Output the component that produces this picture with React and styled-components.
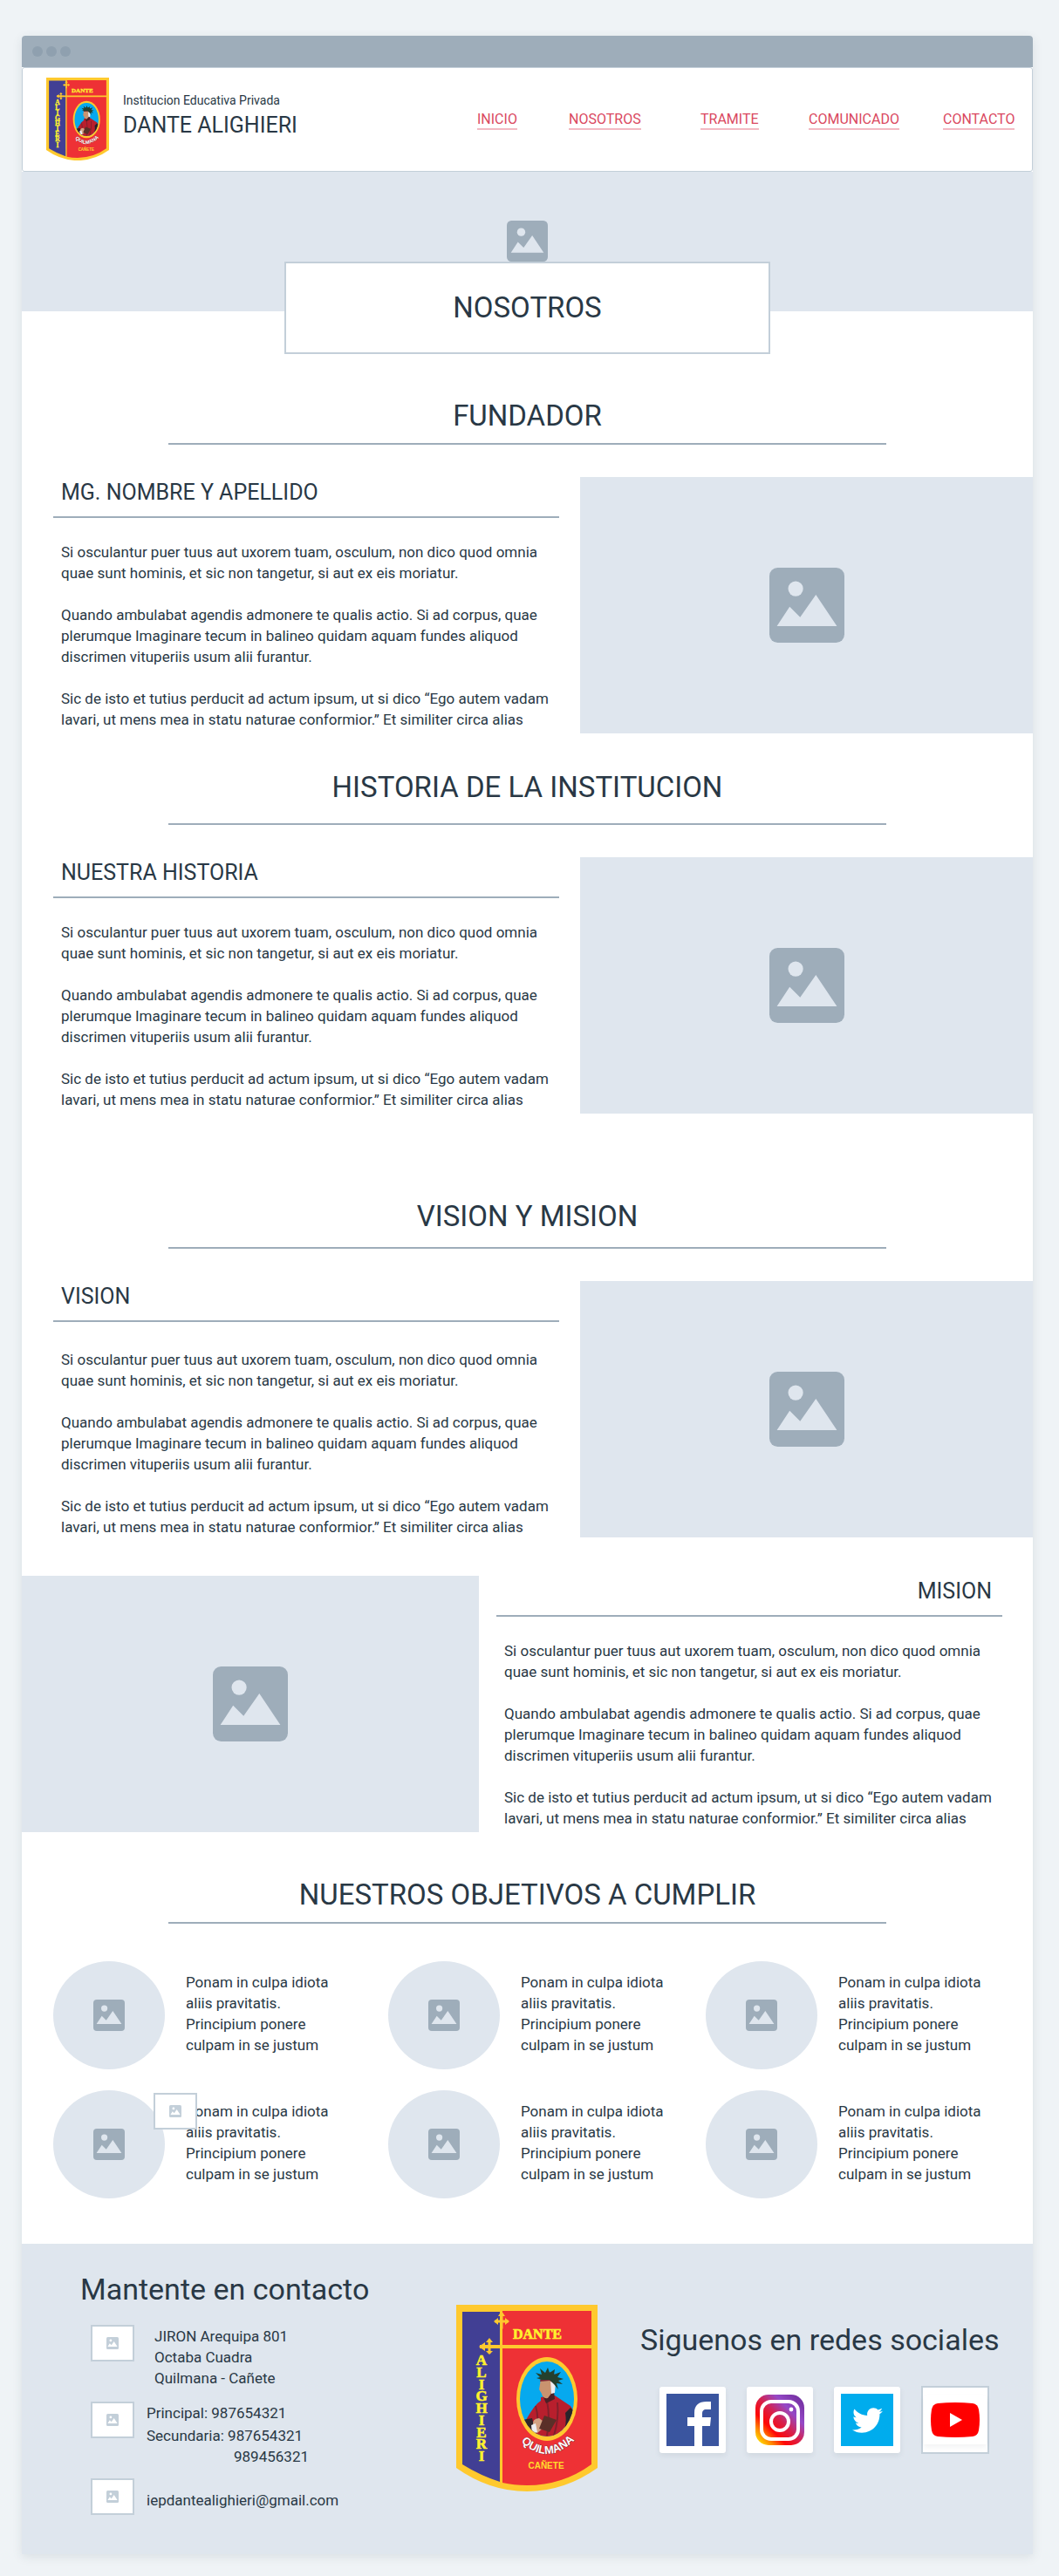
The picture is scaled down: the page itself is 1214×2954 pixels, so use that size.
import React, { useId } from "react";
import styled, { createGlobalStyle } from "styled-components";
import { FaTwitter } from "react-icons/fa";

const color = {
  page: "#eff3f6",
  bar: "#9eadba",
  dot: "#8fa0af",
  panel: "#dfe6ee",
  line: "#c3cfd9",
  ink: "#293845",
  link: "#da4860",
  linkLine: "#f2b9c2",
};

const GlobalStyle = createGlobalStyle`
  *, *::before, *::after { box-sizing: border-box; }
  body {
    margin: 0;
    background: ${color.page};
    color: ${color.ink};
    font-family: Roboto, "Liberation Sans", sans-serif;
    font-size: 17px;
    line-height: 24px;
  }
  h1, h2, h3, p, ul { margin: 0; padding: 0; font-weight: 400; }
  ul { list-style: none; }
  svg { display: block; }
`;

const Page = styled.div`
  padding: 41px 30px 25px 25px;
`;

const Window = styled.div`
  background: #fff;
  border-radius: 4px 4px 0 0;
  box-shadow: 0 3px 12px rgba(41, 56, 69, 0.1);
`;

const TitleBar = styled.div`
  display: flex;
  align-items: center;
  gap: 4px;
  height: 36px;
  padding-left: 12px;
  background: ${color.bar};
  border-radius: 4px 4px 0 0;
`;

const Dot = styled.span`
  width: 12px;
  height: 12px;
  border-radius: 50%;
  background: ${color.dot};
`;

const Header = styled.header`
  display: flex;
  justify-content: space-between;
  min-height: 120px;
  padding: 11px 20px 0 27px;
  border: 1px solid ${color.line};
  border-radius: 3px;
`;

const Brand = styled.div`
  display: flex;
  align-items: flex-start;
  gap: 16px;
`;

const BrandText = styled.div`
  padding-top: 16px;
`;

const BrandKind = styled.p`
  font-size: 14px;
  line-height: 20px;
`;

const BrandName = styled.p`
  padding-top: 4px;
  font-size: 25px;
  line-height: 30px;
`;

const Nav = styled.nav`
  display: grid;
  grid-template-columns: 105px 151px 124px 154px 82px;
  justify-items: start;
  align-content: start;
  padding-top: 38px;
`;

const NavLink = styled.a`
  color: ${color.link};
  font-size: 16px;
  line-height: 20px;
  text-decoration: none;
  border-bottom: 2px solid ${color.linkLine};
`;

const Hero = styled.section`
  display: flex;
  flex-direction: column;
  align-items: center;
  padding-top: 56px;
  background: ${color.panel};
`;

const HeroTitle = styled.h1`
  display: flex;
  align-items: center;
  justify-content: center;
  width: 48%;
  min-width: 300px;
  height: 106px;
  margin-bottom: -49px;
  background: #fff;
  border: 2px solid ${color.line};
  font-size: 33px;
  line-height: 40px;
`;

const Section = styled.section`
  padding-top: ${(p) => p.$top}px;
`;

const SectionTitle = styled.h2`
  width: 71%;
  margin: 0 auto 37px;
  padding-bottom: ${(p) => p.$drop}px;
  border-bottom: 2px solid ${color.bar};
  font-size: 33px;
  line-height: 40px;
  text-align: center;
`;

const Split = styled.div`
  display: grid;
  grid-template-columns: ${(p) => (p.$flip ? "524fr 635fr" : "640fr 519fr")};
  margin-top: ${(p) => (p.$flip ? 44 : 0)}px;
`;

const Picture = styled.div`
  display: flex;
  align-items: center;
  justify-content: center;
  min-height: 294px;
  background: ${color.panel};
`;

const Article = styled.article`
  padding: ${(p) => (p.$flip ? "3px 35px 0 20px" : "3px 24px 0 36px")};
`;

const ArticleTitle = styled.h3`
  padding: 0 12px 12px 9px;
  border-bottom: 2px solid ${color.bar};
  font-size: 25px;
  line-height: 30px;
  text-align: ${(p) => (p.$flip ? "right" : "left")};
`;

const ArticleBody = styled.div`
  display: grid;
  gap: 24px;
  padding: ${(p) => p.$gap}px 0 0 9px;
`;

const Goals = styled.ul`
  display: grid;
  grid-template-columns: 384fr 364fr 375fr;
  row-gap: 24px;
  padding: 6px 0 52px 36px;
`;

const Goal = styled.li`
  position: relative;
  display: flex;
  gap: 24px;
`;

const Oval = styled.div`
  display: flex;
  flex: none;
  align-items: center;
  justify-content: center;
  width: 128px;
  height: 124px;
  border-radius: 50%;
  background: ${color.panel};
`;

const GoalText = styled.p`
  padding-top: 12px;
`;

const Frame = styled.div`
  display: flex;
  flex: none;
  align-items: center;
  justify-content: center;
  width: 50px;
  height: 42px;
  background: #fff;
  border: 2px solid ${color.line};
`;

const FloatingFrame = styled(Frame)`
  position: absolute;
  top: 3px;
  left: 115px;
`;

const Footer = styled.footer`
  display: grid;
  grid-template-columns: 498fr 211fr 450fr;
  padding-bottom: 45px;
  background: ${color.panel};
`;

const FooterTitle = styled.h2`
  font-size: 34px;
  line-height: 40px;
`;

const Contact = styled.div`
  padding: 32px 0 0 67px;
`;

const ContactList = styled.ul`
  display: grid;
  grid-template-rows: 88px 88px auto;
  padding: 21px 0 0 12px;
`;

const ContactRow = styled.li`
  display: flex;
  gap: ${(p) => (p.$wide ? 23 : 14)}px;
`;

const ContactText = styled.div`
  padding-top: ${(p) => (p.$low ? 13 : 1)}px;
`;

const Phone = styled.p`
  padding-left: ${(p) => (p.$indent ? 100 : 0)}px;
  margin-top: ${(p) => (p.$spaced ? 2 : 0)}px;
`;

const Mail = styled.a`
  color: inherit;
  text-decoration: none;
`;

const FooterCrest = styled.div`
  padding-top: 70px;
`;

const Social = styled.div`
  padding-top: 90px;
`;

const SocialList = styled.ul`
  display: flex;
  align-items: center;
  gap: 24px;
  padding: 33px 0 0 22px;
`;

const Tile = styled.a`
  display: flex;
  align-items: center;
  justify-content: center;
  width: 76px;
  height: 76px;
  background: #fff;
  border-radius: 3px;
  box-shadow: 0 3px 6px rgba(41, 56, 69, 0.08);
`;

const OutlinedTile = styled(Tile)`
  width: 78px;
  height: 78px;
  border: 2px solid ${color.line};
  border-radius: 0;
  box-shadow: none;
`;

const TileCard = styled.span`
  display: flex;
  align-items: center;
  justify-content: center;
  width: 72px;
  height: 56px;
  box-shadow: 0 3px 6px rgba(41, 56, 69, 0.06);
`;

const TwitterTile = styled.span`
  display: flex;
  align-items: center;
  justify-content: center;
  width: 60px;
  height: 60px;
  background: #00aced;
  color: #fff;
`;

function ImageIcon({ size, fill = color.bar, cut = color.panel }) {
  return (
    <svg width={size} height={size} viewBox="0 0 100 100" aria-hidden="true">
      <rect width="100" height="100" rx="11" fill={fill} />
      <circle cx="35" cy="28" r="10" fill={cut} />
      <path d="M10 78 27 52 41 66 62 36 90 78Z" fill={cut} />
    </svg>
  );
}

const sideLetters = "ALIGHIERI".split("");

function Crest({ width }) {
  const arc = useId();
  const clip = useId();
  return (
    <svg width={width} viewBox="0 0 162 214" role="img" aria-label="Dante Alighieri, Quilmana, Cañete">
      <path d="M0 0H162V187Q124 214 81 214Q38 214 0 187Z" fill="#ffc92e" />
      <path d="M7 8H50V203Q28 196 7 183Z" fill="#413f94" />
      <path d="M53 7H155V183Q122 207 81 207Q66 207 53 204Z" fill="#ee3135" />
      <path d="M27 46H156V50H27Z" fill="#ffc92e" />
      <g stroke="#ffc92e" strokeWidth="3" strokeLinecap="square">
        <path d="M52 12V26M46 19H58" />
        <path d="M38 42V54M30 48H44" />
      </g>
      <g fill="#ffc92e">
        <path d="M52 7 56 13H48ZM43 19 48 15V23ZM61 19 56 15V23Z" />
        <path d="M26 48 33 43V53ZM38 38 42 43H34ZM38 57 42 53H34Z" />
      </g>
      <text x="93" y="39" textAnchor="middle" fontFamily="Liberation Serif, serif" fontWeight="700" fontSize="16" fill="#fff22d" stroke="#fff22d" strokeWidth="0.6">
        DANTE
      </text>
      <g textAnchor="middle" fontFamily="Liberation Serif, serif" fontWeight="700" fontSize="17" fill="#fff22d" stroke="#fff22d" strokeWidth="0.6">
        {sideLetters.map((letter, i) => (
          <text key={i} x="29" y={69 + i * 13.75}>{letter}</text>
        ))}
      </g>
      <clipPath id={clip}>
        <ellipse cx="104" cy="108" rx="31" ry="43" />
      </clipPath>
      <ellipse cx="104" cy="108" rx="35" ry="48" fill="#ffc92e" />
      <g clipPath={`url(#${clip})`}>
        <rect x="70" y="60" width="70" height="96" fill="#06a9ee" />
        <path d="M97 106 113 104 131 116 140 130V156H74L80 132Q90 114 97 110Z" fill="#b81f2d" />
        <path d="M125 124 131 118 140 128V150L118 154Q128 142 125 124Z" fill="#28242b" />
        <path d="M76 132 87 130 93 152H76Z" fill="#30272c" />
        <path d="M91 116Q95 130 92 142M104 110Q108 130 104 150M116 112Q118 130 112 150" fill="none" stroke="#80202c" strokeWidth="2" />
        <path d="M99 104 112 99 113 108 103 113Z" fill="#4b2027" />
        <path d="M97 85 108 84 111 99 105 107Q99 108 98 102L95 97Z" fill="#c9936f" />
        <path d="M108 86 114 89 113 101 109 102Z" fill="#efedf0" />
        <path d="M96 88 98 79 110 77 117 84 114 91 107 87Z" fill="#7a2734" />
        <path d="M92 84 96 83 91 78 98 80 96 73 102 78 105 72 107 78 113 74 112 80 120 77 116 83 123 85 117 87 122 91 115 90 117 97 112 91 107 86 98 86Z" fill="#24402d" />
        <path d="M88 137Q87 131 95 130L103 136 100 141 93 147Q87 146 88 137Z" fill="#d3a283" />
        <path d="M86 138 91 136 93 146 87 148Z" fill="#eeeef2" />
        <path d="M101 127 115 132 107 146 95 142Z" fill="#5a2f28" />
      </g>
      <path id={arc} d="M66 148Q104 195 144 146" fill="none" />
      <text fontFamily="Liberation Sans, sans-serif" fontWeight="700" fontSize="13" fill="#fff" stroke="#7b2430" strokeWidth="0.8" paintOrder="stroke">
        <textPath href={`#${arc}`} startOffset="50%" textAnchor="middle">QUILMANA</textPath>
      </text>
      <text x="103" y="188" textAnchor="middle" fontFamily="Liberation Sans, sans-serif" fontWeight="700" fontSize="10" fill="#ffdd2d">
        CAÑETE
      </text>
    </svg>
  );
}

function FacebookLogo() {
  return (
    <svg width="60" height="60" viewBox="0 0 60 60" aria-hidden="true">
      <rect width="60" height="60" fill="#3a559f" />
      <path d="M32 60V37H24V27H32V22C32 13 37 9 46 9H51V18H46C42 18 41 20 41 23V27H51L50 37H41V60Z" fill="#fff" />
    </svg>
  );
}

function InstagramLogo() {
  const gradient = useId();
  return (
    <svg width="56" height="58" viewBox="0 0 56 58" aria-hidden="true">
      <linearGradient id={gradient} x1="0" y1="1" x2="1" y2="0">
        <stop offset="0.06" stopColor="#ffdd00" />
        <stop offset="0.18" stopColor="#ff8a00" />
        <stop offset="0.32" stopColor="#ff0606" />
        <stop offset="0.5" stopColor="#d8204a" />
        <stop offset="0.7" stopColor="#9549c7" />
        <stop offset="0.88" stopColor="#7a35a8" />
        <stop offset="1" stopColor="#7030a0" />
      </linearGradient>
      <rect width="56" height="58" rx="15" fill={`url(#${gradient})`} />
      <g fill="none" stroke="#fff" strokeWidth="4">
        <rect x="7" y="8" width="42" height="43" rx="11" />
        <circle cx="28" cy="31" r="10" />
      </g>
      <circle cx="41" cy="17" r="2.4" fill="#fff" />
    </svg>
  );
}

function YoutubeLogo() {
  return (
    <svg width="56" height="40" viewBox="0 0 56 40" aria-hidden="true">
      <path d="M8 1Q28-1 48 1Q54 2 55 8Q57 20 55 32Q54 38 48 39Q28 41 8 39Q2 38 1 32Q-1 20 1 8Q2 2 8 1Z" fill="#ff0000" />
      <path d="M22 12 36 20 22 28Z" fill="#fff" />
    </svg>
  );
}

function Copy({ flip, title, gap = 27 }) {
  return (
    <Article $flip={flip}>
      <ArticleTitle $flip={flip}>{title}</ArticleTitle>
      <ArticleBody $gap={gap}>
        <p>
          Si osculantur puer tuus aut uxorem tuam, osculum, non dico quod omnia
          <br />
          quae sunt hominis, et sic non tangetur, si aut ex eis moriatur.
        </p>
        <p>
          Quando ambulabat agendis admonere te qualis actio. Si ad corpus, quae
          <br />
          plerumque Imaginare tecum in balineo quidam aquam fundes aliquod
          <br />
          discrimen vituperiis usum alii furantur.
        </p>
        <p>
          Sic de isto et tutius perducit ad actum ipsum, ut si dico “Ego autem vadam
          <br />
          lavari, ut mens mea in statu naturae conformior.” Et similiter circa alias
        </p>
      </ArticleBody>
    </Article>
  );
}

const navItems = ["INICIO", "NOSOTROS", "TRAMITE", "COMUNICADO", "CONTACTO"];
const goals = [1, 2, 3, 4, 5, 6];

function SmallFrame() {
  return (
    <Frame>
      <ImageIcon size={14} fill={color.line} cut="#fff" />
    </Frame>
  );
}

export default function App() {
  return (
    <Page>
      <GlobalStyle />
      <Window>
        <TitleBar>
          <Dot />
          <Dot />
          <Dot />
        </TitleBar>
        <Header>
          <Brand>
            <Crest width={72} />
            <BrandText>
              <BrandKind>Institucion Educativa Privada</BrandKind>
              <BrandName>DANTE ALIGHIERI</BrandName>
            </BrandText>
          </Brand>
          <Nav>
            {navItems.map((item) => (
              <NavLink key={item} href={`#${item.toLowerCase()}`}>{item}</NavLink>
            ))}
          </Nav>
        </Header>

        <main>
          <Hero>
            <ImageIcon size={47} />
            <HeroTitle>NOSOTROS</HeroTitle>
          </Hero>

          <Section $top={100}>
            <SectionTitle $drop={11}>FUNDADOR</SectionTitle>
            <Split>
              <Copy title="MG. NOMBRE Y APELLIDO" />
              <Picture><ImageIcon size={86} /></Picture>
            </Split>
          </Section>

          <Section $top={42}>
            <SectionTitle $drop={21}>HISTORIA DE LA INSTITUCION</SectionTitle>
            <Split>
              <Copy title="NUESTRA HISTORIA" />
              <Picture><ImageIcon size={86} /></Picture>
            </Split>
          </Section>

          <Section $top={98}>
            <SectionTitle $drop={15}>VISION Y MISION</SectionTitle>
            <Split>
              <Copy title="VISION" gap={31} />
              <Picture><ImageIcon size={86} /></Picture>
            </Split>
            <Split $flip>
              <Picture><ImageIcon size={86} /></Picture>
              <Copy flip title="MISION" />
            </Split>
          </Section>

          <Section $top={52}>
            <SectionTitle $drop={11}>NUESTROS OBJETIVOS A CUMPLIR</SectionTitle>
            <Goals>
              {goals.map((goal) => (
                <Goal key={goal}>
                  <Oval><ImageIcon size={36} /></Oval>
                  <GoalText>
                    Ponam in culpa idiota
                    <br />
                    aliis pravitatis.
                    <br />
                    Principium ponere
                    <br />
                    culpam in se justum
                  </GoalText>
                  {goal === 4 && (
                    <FloatingFrame>
                      <ImageIcon size={14} fill={color.line} cut="#fff" />
                    </FloatingFrame>
                  )}
                </Goal>
              ))}
            </Goals>
          </Section>
        </main>

        <Footer>
          <Contact>
            <FooterTitle>Mantente en contacto</FooterTitle>
            <ContactList>
              <ContactRow $wide>
                <SmallFrame />
                <ContactText>
                  <p>JIRON Arequipa 801</p>
                  <p>Octaba Cuadra</p>
                  <p>Quilmana - Cañete</p>
                </ContactText>
              </ContactRow>
              <ContactRow>
                <SmallFrame />
                <ContactText>
                  <Phone>Principal: 987654321</Phone>
                  <Phone $spaced>Secundaria: 987654321</Phone>
                  <Phone $indent>989456321</Phone>
                </ContactText>
              </ContactRow>
              <ContactRow>
                <SmallFrame />
                <ContactText $low>
                  <Mail href="mailto:iepdantealighieri@gmail.com">iepdantealighieri@gmail.com</Mail>
                </ContactText>
              </ContactRow>
            </ContactList>
          </Contact>
          <FooterCrest>
            <Crest width={162} />
          </FooterCrest>
          <Social>
            <FooterTitle>Siguenos en redes sociales</FooterTitle>
            <SocialList>
              <li><Tile href="#facebook" aria-label="Facebook"><FacebookLogo /></Tile></li>
              <li><Tile href="#instagram" aria-label="Instagram"><InstagramLogo /></Tile></li>
              <li>
                <Tile href="#twitter" aria-label="Twitter">
                  <TwitterTile><FaTwitter size={35} /></TwitterTile>
                </Tile>
              </li>
              <li>
                <OutlinedTile href="#youtube" aria-label="YouTube">
                  <TileCard><YoutubeLogo /></TileCard>
                </OutlinedTile>
              </li>
            </SocialList>
          </Social>
        </Footer>
      </Window>
    </Page>
  );
}
